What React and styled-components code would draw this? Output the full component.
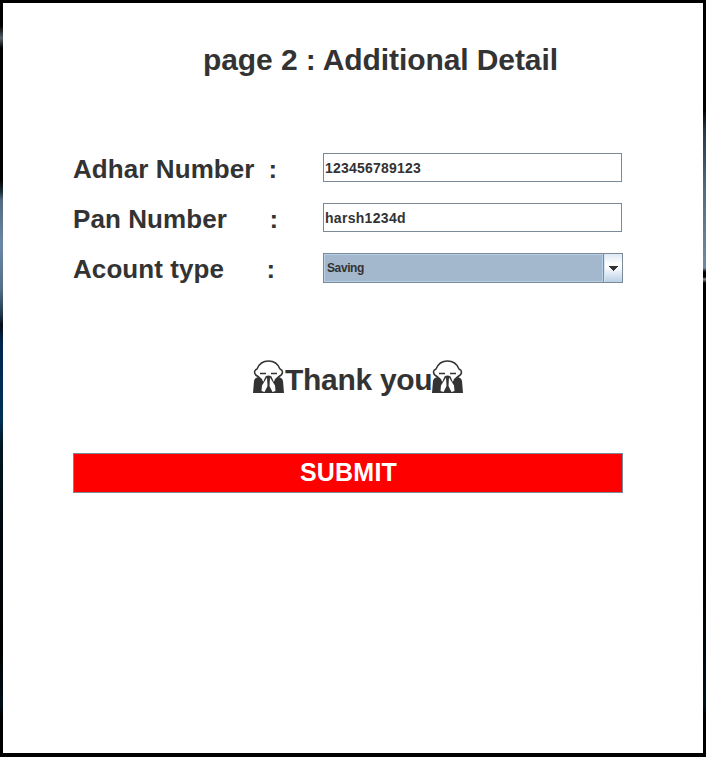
import React from "react";
import styled, { createGlobalStyle } from "styled-components";

const GlobalStyle = createGlobalStyle`
  * { box-sizing: border-box; }
  body { margin: 0; overflow: hidden; background: #000; }
`;

const Backdrop = styled.main`
  width: 706px;
  height: 757px;
  padding: 3px 3px 4px;
  background:
    linear-gradient(#000 0, #000 26px, #566069 38px, #000 48px, #000 180px, #1c303a 192px, #536a80 200px, #6c87a5 245px, #536d88 290px, #1c3445 316px, #080c18 325px, #00264e 342px, #002b52 380px, #003154 420px, #001722 445px, #00060b 540px, #000 650px, #001018 705px, #000 716px) left / 3px 100% no-repeat,
    linear-gradient(#000 0, #000 110px, #273848 130px, #536b83 190px, #7189a2 268px, #000 272px, #000 277px, #8b8b90 279px, #000 283px, #000 570px, #00080d 650px, #00101a 705px, #000 715px) right / 3px 100% no-repeat,
    #000;
  font-family: "Liberation Sans", Arial, sans-serif;
  font-weight: 700;
  color: #333;
`;

const Panel = styled.form`
  display: flex;
  flex-direction: column;
  height: 750px;
  padding: 37px 80px 0 70px;
  background: #fff;
`;

const Title = styled.h1`
  margin: 0 0 0 130px;
  height: 40px;
  font-size: 30px;
  line-height: 40px;
  letter-spacing: -0.09px;
  white-space: nowrap;
`;

const Fields = styled.section`
  display: grid;
  gap: 20px;
  margin-top: 73px;
`;

const Row = styled.div`
  display: grid;
  grid-template-columns: 250px 300px;
  height: 30px;
`;

const Label = styled.label`
  display: flex;
  align-items: center;
  height: 30px;
  margin-top: 1px;
  font-size: 26px;
  line-height: 30px;
  white-space: pre;
`;

const LabelText = styled.span`
  width: ${({ $width }) => $width}px;
  letter-spacing: 0.08px;
`;

const TextInput = styled.input`
  width: 299px;
  height: 29px;
  padding: 0 0 0 1px;
  border: 1px solid #7a8a99;
  border-radius: 0;
  outline: 0;
  background: #fff;
  color: #333;
  font: 700 14px "Liberation Sans", Arial, sans-serif;
  letter-spacing: ${({ $spacing }) => $spacing}px;
`;

const SelectBox = styled.button`
  display: flex;
  width: 300px;
  height: 30px;
  padding: 0;
  border: 1px solid #7a8a99;
  background: #a3b8cc;
  color: #333;
  font: 700 12px "Liberation Sans", Arial, sans-serif;
  text-align: left;
`;

const SelectValue = styled.span`
  flex: 1;
  height: 28px;
  padding-left: 2px;
  border: 1px solid #b8cfe5;
  line-height: 26px;
  letter-spacing: -0.4px;
`;

const SelectArrow = styled.span`
  display: grid;
  justify-content: start;
  align-content: start;
  width: 19px;
  height: 28px;
  padding: 12px 0 0 4px;
  border-left: 1px solid #7a8a99;
  background: linear-gradient(#dde8f3, #fff 35%, #fff 45%, #b8cfe5);
  box-shadow: inset 1px 0 #d6e3f0;
`;

const Thanks = styled.section`
  display: flex;
  align-items: flex-start;
  height: 40px;
  margin: 74px 0 0 180px;
  font-size: 30px;
  line-height: 40px;
`;

const ThanksText = styled.span`
  width: 147px;
  margin-top: 3px;
  letter-spacing: -0.3px;
  white-space: nowrap;
`;

const PersonSvg = styled.svg`
  flex: none;
  width: 32px;
  height: 34px;
  margin-top: 3px;
`;

const Submit = styled.button`
  width: 550px;
  height: 40px;
  margin-top: 56px;
  padding: 0 0 1px 1px;
  border: 1px solid #7a8a99;
  background: #f00;
  color: #fff;
  font: 700 25px "Liberation Sans", Arial, sans-serif;
  letter-spacing: 0.2px;
`;

function BowingPerson() {
  return (
    <PersonSvg viewBox="0 0 32 34" aria-hidden="true">
      <path d="M0 33L1 21Q1.5 18 5 17L10 20H21L26 17Q29.5 18 30 21L31 33Z" fill="#333" />
      <path d="M5 16.5Q1.5 15 1.5 12Q1.5 10 4 9C6 4 10 1 15.5 1S25 4 27 9Q29.5 10 29.5 12Q29.5 15 26 16.5L22 20L19 23H12L9 20Z" fill="#fff" />
      <path d="M9 20L5 16.5Q1.5 15 1.5 12Q1.5 10 4 9C6 4 10 1 15.5 1S25 4 27 9Q29.5 10 29.5 12Q29.5 15 26 16.5L22 20" fill="none" stroke="#333" strokeWidth="1.5" />
      <path d="M7 13.5H13M18 13.5H24" stroke="#333" strokeWidth="1.6" />
      <path d="M11 20L12.5 16.5Q15.5 14.5 18.5 16.5L20 20L22 27H9Z" fill="#333" />
      <path d="M14 17.5L9 25.5L8.5 31L11.5 32L14.5 26ZM17 17.5L22 25.5L22.5 31L19.5 32L16.5 26Z" fill="#fff" />
    </PersonSvg>
  );
}

function DetailRow({ label, labelWidth, children }) {
  return (
    <Row>
      <Label>
        <LabelText $width={labelWidth}>{label}</LabelText>:
      </Label>
      {children}
    </Row>
  );
}

export default function App() {
  return (
    <>
      <GlobalStyle />
      <Backdrop>
        <Panel onSubmit={(event) => event.preventDefault()}>
          <Title>page 2 : Additional Detail</Title>
          <Fields>
            <DetailRow label="Adhar Number" labelWidth={195.5}>
              <TextInput aria-label="Adhar Number" defaultValue="123456789123" $spacing={0.22} />
            </DetailRow>
            <DetailRow label="Pan Number" labelWidth={196.5}>
              <TextInput aria-label="Pan Number" defaultValue="harsh1234d" $spacing={0.3} />
            </DetailRow>
            <DetailRow label="Acount type" labelWidth={193.5}>
              <SelectBox type="button">
                <SelectValue>Saving</SelectValue>
                <SelectArrow>
                  <svg width="10" height="5" viewBox="0 0 10 5" shapeRendering="crispEdges" aria-hidden="true">
                    <path d="M0 0H10L5 5Z" fill="#333" />
                  </svg>
                </SelectArrow>
              </SelectBox>
            </DetailRow>
          </Fields>
          <Thanks>
            <BowingPerson />
            <ThanksText>Thank you</ThanksText>
            <BowingPerson />
          </Thanks>
          <Submit type="submit">SUBMIT</Submit>
        </Panel>
      </Backdrop>
    </>
  );
}
